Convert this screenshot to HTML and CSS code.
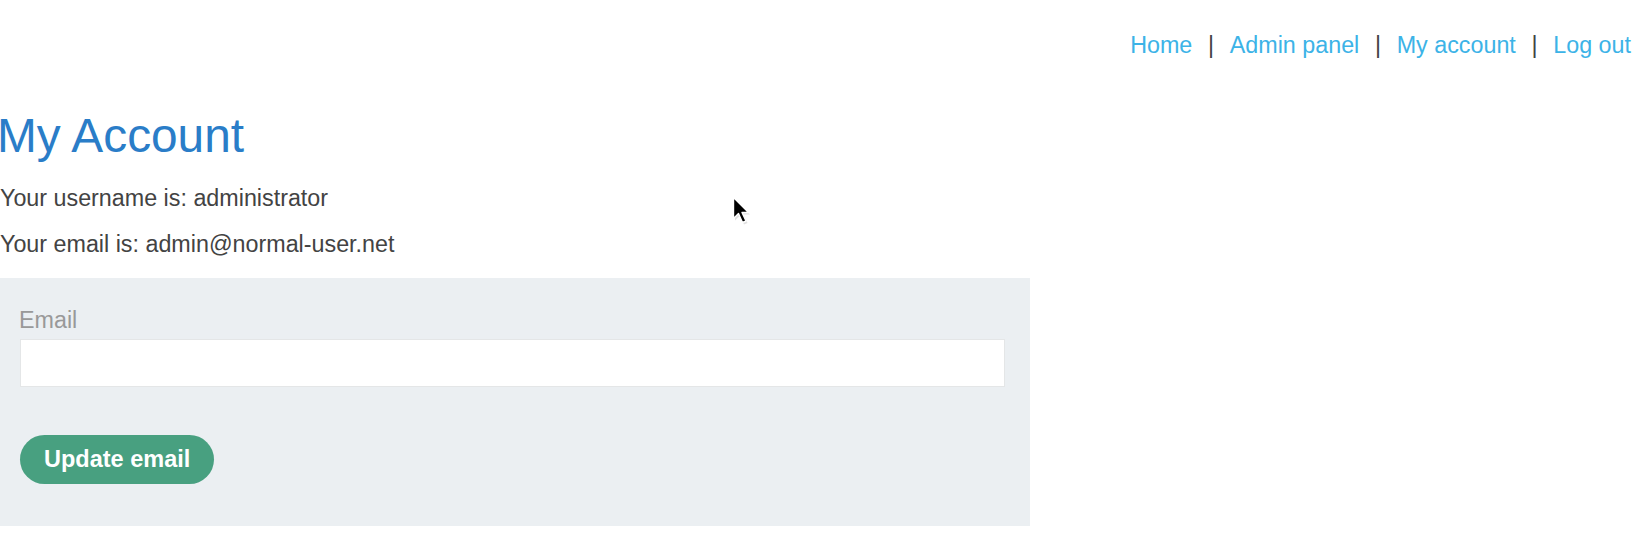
FILE: index.html
```html
<!DOCTYPE html>
<html lang="en">
<head>
<meta charset="utf-8">
<title>My Account</title>
<link rel="stylesheet" href="styles.css">
</head>
<body>
<header class="top">
  <nav class="nav">
    <a href="#">Home</a><span class="sep">|</span>
    <a href="#">Admin panel</a><span class="sep">|</span>
    <a href="#">My account</a><span class="sep">|</span>
    <a href="#">Log out</a>
  </nav>
</header>
<main class="main">
  <h1 class="title">My Account</h1>
  <p class="info first">Your username is: administrator</p>
  <p class="info">Your email is: admin@normal-user.net</p>
  <form class="panel">
    <label class="label" for="email">Email</label>
    <input class="field" id="email" type="email">
    <button class="btn" type="button">Update email</button>
  </form>
</main>
<svg class="cursor" width="22" height="32" viewBox="0 0 22 32">
  <path d="M3 3.5 L3 24.5 L8 19.5 L12 28.5 L15.5 27 L11.5 18.5 L18 18.5 Z" fill="#999" opacity="0.3"/>
  <path d="M1.5 1.5 L1.5 22.5 L6.5 17.5 L10.5 26.5 L14 25 L10 16.5 L16.5 16.5 Z" fill="#000" stroke="#fff" stroke-width="1.4" stroke-linejoin="round"/>
</svg>
</body>
</html>
```
FILE: styles.css
```css
html, body {
  margin: 0;
  padding: 0;
  background: #fff;
}
body {
  font-family: "Liberation Sans", Arial, sans-serif;
  font-size: 23.3px;
  line-height: 27px;
  color: #434343;
  position: relative;
  width: 1632px;
  height: 540px;
  overflow: hidden;
}
.top {
  padding-top: 32px;
}
.nav {
  display: flex;
  justify-content: flex-end;
  gap: 15.7px;
  padding-right: 1px;
}
.nav a {
  color: #3cb3e7;
  text-decoration: none;
}
.sep {
  color: #434343;
}
.main {
  padding-top: 51px;
}
.title {
  margin: 0 0 23.8px -3px;
  font-size: 47.8px;
  line-height: 51px;
  font-weight: normal;
  color: #2a7dc8;
}
.info {
  margin: 0 0 19.55px;
}
.info + .info {
  margin-bottom: 19.25px;
}
.panel {
  width: 1030px;
  box-sizing: border-box;
  background: #ebeff2;
  padding: 29.5px 25px 42.5px 19px;
  display: flex;
  flex-direction: column;
  align-items: flex-start;
}
.label {
  color: #999;
  margin-bottom: 4.8px;
}
.field {
  align-self: stretch;
  margin-left: 1px;
  height: 48.5px;
  box-sizing: border-box;
  border: 1px solid #e4e6e7;
  background: #fff;
  margin-bottom: 48px;
  font: inherit;
  padding: 0 8px;
}
.btn {
  margin-left: 1px;
  height: 48.6px;
  padding: 0 24px;
  border: none;
  border-radius: 25px;
  background: #48a080;
  color: #fff;
  font: bold 23.5px/27px "Liberation Sans", Arial, sans-serif;
}
.cursor {
  position: absolute;
  left: 732px;
  top: 196px;
}
```
